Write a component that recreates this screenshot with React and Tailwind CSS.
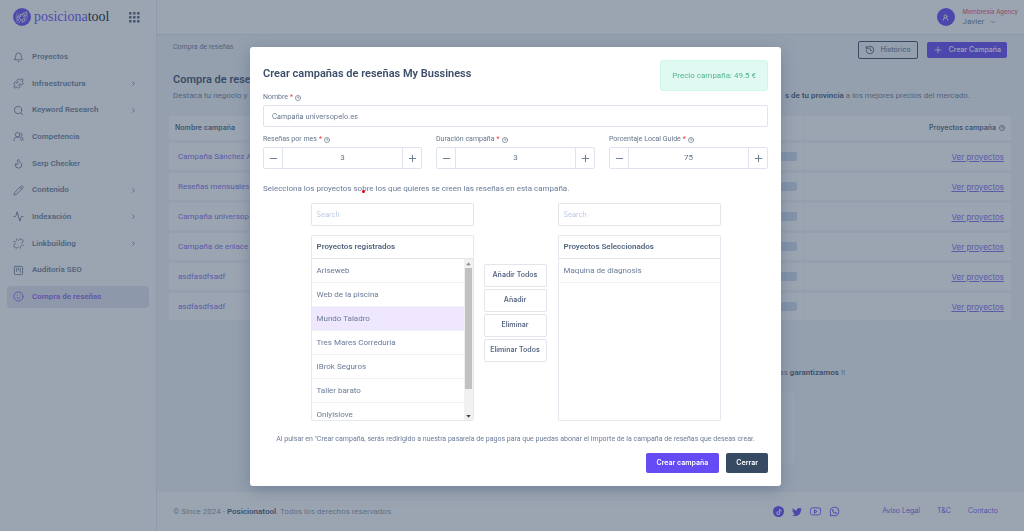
import React, { useState } from 'react';
import {
  Activity, Bell, ChevronDown, ChevronRight, Flame, History, Minus, Pencil,
  Plus, Puzzle, Search, Smile, SquareKanban, Unlink, UserRound, UsersRound,
} from 'lucide-react';
import { FaTiktok, FaTwitter, FaWhatsapp } from 'react-icons/fa';
import { FiYoutube } from 'react-icons/fi';

const menuItems = [
  { label: 'Proyectos', icon: Bell },
  { label: 'Infraestructura', icon: Puzzle, nested: true },
  { label: 'Keyword Research', icon: Search, nested: true },
  { label: 'Competencia', icon: UsersRound },
  { label: 'Serp Checker', icon: Flame },
  { label: 'Contenido', icon: Pencil, nested: true },
  { label: 'Indexación', icon: Activity, nested: true },
  { label: 'Linkbuilding', icon: Unlink, nested: true },
  { label: 'Auditoría SEO', icon: SquareKanban },
  { label: 'Compra de reseñas', icon: Smile, active: true },
];

const campaigns = [
  'Campaña Sánchez A',
  'Reseñas mensuales',
  'Campaña universop',
  'Campaña de enlace',
  'asdfasdfsadf',
  'asdfasdfsadf',
];

const registered = [
  'Ariseweb',
  'Web de la piscina',
  'Mundo Taladro',
  'Tres Mares Correduria',
  'IBrok Seguros',
  'Taller barato',
  'Onlyislove',
];

const HelpIcon = () => (
  <svg viewBox="0 0 14 14" className="size-[6px]" fill="none" stroke="currentColor" strokeWidth="1.6" strokeLinecap="round">
    <circle cx="7" cy="7" r="6" />
    <path d="M5.200 5.200c.3-1.800 3.600-1.600 3.500.2 0 1.200-1.700 1.300-1.700 2.600" />
  </svg>
);

const Logo = () => (
  <a href="#" className="flex items-center gap-[3px]">
    <svg viewBox="0 0 36 36" className="size-[18px]">
      <circle cx="18" cy="18" r="18" fill="#6549f5" />
      <g fill="none" stroke="#fff" strokeWidth="1.4" strokeLinecap="round" strokeLinejoin="round">
        <path d="M13 20c2-7 7-11 15-12 0 7-4 13-11 16z" />
        <path d="M14 17l-6 2 3-5 5-1M19 23l-1 6 5-3 1-6" />
        <circle cx="21.500" cy="14.500" r="2.500" />
        <path d="M12 22l-5 6M15 25l-4 5M10 21l-3 3" />
        <path d="M8 10c-3 5-2 11 2 15M27 11c3 5 1 12-3 16" strokeWidth=".8" />
      </g>
    </svg>
    <span className="font-['Liberation_Serif',serif] text-[14px] leading-[18px] text-[#6549f5]">
      posiciona<span className="text-[#0b1220]">tool</span>
    </span>
  </a>
);

const Sidebar = () => (
  <aside className="flex w-[157px] shrink-0 flex-col border-r border-slate-200 bg-white">
    <div className="flex h-[34px] items-center justify-between pl-[13px] pr-[16px]">
      <Logo />
      <button type="button" aria-label="Aplicaciones" className="text-[#4d6080]">
        <svg viewBox="0 0 11 11" className="size-[11px]" fill="currentColor">
          {[0, 4, 8].map((y) => [0, 4, 8].map((x) => (
            <rect key={`${x}-${y}`} x={x} y={y} width="2.600" height="2.600" rx=".7" />
          )))}
        </svg>
      </button>
    </div>
    <nav className="mt-3 flex h-[262px] flex-col justify-between px-[7px]">
      {menuItems.map(({ label, icon: Icon, nested, active }) => (
        <a
          key={label}
          href="#"
          className={`flex h-[22px] items-center rounded-sm pl-[6px] pr-3 text-[8px] font-semibold ${
            active ? 'bg-[#e3e7f2] text-[#8a5cf0]' : 'text-[#6b7b98]'
          }`}
        >
          <Icon className="size-[11px]" strokeWidth={2} />
          <span className="ml-2 flex-1">{label}</span>
          {nested && <ChevronRight className="size-[7px]" strokeWidth={3} />}
        </a>
      ))}
    </nav>
  </aside>
);

const TopBar = () => (
  <header className="flex h-[35px] items-center justify-end border-b border-slate-200 bg-white pr-[6px]">
    <span className="flex size-[18px] items-center justify-center rounded-full bg-[#5f42f5] text-white">
      <UserRound className="size-[7px]" strokeWidth={3} />
    </span>
    <div className="ml-2 leading-[10px] text-[#64748b]">
      <p className="font-[Inter,sans-serif] text-[6px] font-medium text-[#f05a6c]">Membresía Agency</p>
      <button type="button" className="flex items-center gap-[6px] text-[8px]">
        Javier <ChevronDown className="size-[6px]" strokeWidth={3} />
      </button>
    </div>
  </header>
);

const CampaignTable = () => (
  <table className="-mx-1 mt-[9px] w-[calc(100%_+_8px)] border-separate border-spacing-x-0 border-spacing-y-[3px] text-left text-[8px]">
    <thead>
      <tr className="h-6 bg-white font-[Inter,sans-serif] text-[7px] text-[#4d5f7d]">
        <th className="pl-[6px] font-semibold">Nombre campaña</th>
        <th className="w-[170px] border-r border-slate-100" aria-label="Progreso" />
        <th className="w-[207px] pr-[6px] font-semibold">
          <span className="flex items-center justify-end gap-[3px]">
            Proyectos campaña <HelpIcon />
          </span>
        </th>
      </tr>
    </thead>
    <tbody>
      {campaigns.map((name, i) => (
        <tr key={i} className="h-[27px] bg-white">
          <td className="pl-[9px]"><a href="#" className="text-[#8068ee]">{name}</a></td>
          <td className="border-r border-slate-100 pr-[6px]">
            <span className="block h-[9px] rounded-[2px] bg-[#cfdcf0]" />
          </td>
          <td className="pr-[7px] text-right font-[Inter,sans-serif]">
            <a href="#" className="text-[#8068ee] underline">Ver proyectos</a>
          </td>
        </tr>
      ))}
    </tbody>
  </table>
);

const Footer = () => (
  <footer className="flex h-[39px] items-center bg-white pl-4 pr-[26px] text-[8px] text-[#8493aa]">
    <p>
      © Since 2024 - <strong className="font-semibold text-[#40516d]">Posicionatool</strong>. Todos los derechos reservados
    </p>
    <div className="ml-auto flex items-center gap-2 text-[#5f42f5]">
      <a href="#" aria-label="TikTok" className="flex size-[11px] items-center justify-center rounded-full bg-[#5f42f5] text-white">
        <FaTiktok className="size-[6px]" />
      </a>
      <a href="#" aria-label="Twitter"><FaTwitter className="size-[10px]" /></a>
      <a href="#" aria-label="YouTube"><FiYoutube className="size-[11px]" /></a>
      <a href="#" aria-label="WhatsApp"><FaWhatsapp className="size-[11px]" /></a>
    </div>
    <div className="ml-[42px] flex gap-[17px] font-[Inter,sans-serif] text-[7px] text-[#7158ec]">
      <a href="#">Aviso Legal</a>
      <a href="#">T&amp;C</a>
      <a href="#">Contacto</a>
    </div>
  </footer>
);

const FieldLabel = ({ htmlFor, children }) => (
  <label htmlFor={htmlFor} className="flex h-3 items-center gap-[2px] pt-px text-[7px] text-[#64748b]">
    {children} <span className="text-red-500">*</span> <HelpIcon />
  </label>
);

const Stepper = ({ id, label, initial }) => {
  const [value, setValue] = useState(initial);

  return (
    <div className="flex flex-col gap-[2px]">
      <FieldLabel htmlFor={id}>{label}</FieldLabel>
      <div className="flex h-[22px] rounded-[2px] border border-[#dfe3ee] text-[#64748b]">
        <button type="button" aria-label="Menos" onClick={() => setValue(value - 1)} className="flex w-[19px] items-center justify-center border-r border-[#dfe3ee]">
          <Minus className="size-[11px]" />
        </button>
        <input
          id={id}
          value={value}
          onChange={(e) => setValue(Number(e.target.value) || 0)}
          className="min-w-0 flex-1 text-center text-[8px] outline-none"
        />
        <button type="button" aria-label="Más" onClick={() => setValue(value + 1)} className="flex w-[19px] items-center justify-center border-l border-[#dfe3ee]">
          <Plus className="size-[11px]" />
        </button>
      </div>
    </div>
  );
};

const ProjectList = ({ title, items, selected, scroll }) => (
  <div className="w-[163px] text-[8px] text-[#6b7b98]">
    <input
      aria-label={`Buscar en ${title}`}
      placeholder="Search"
      className="block h-[23px] w-full rounded-[2px] border border-[#e3e5ea] px-[5px] font-[Inter,sans-serif] text-[7px] outline-none placeholder:text-[#bccbe6]"
    />
    <div className="mt-[9px] flex h-[186px] flex-col overflow-hidden rounded-[2px] border border-[#e6e8ef]">
      <h3 className="h-[23px] shrink-0 border-b border-[#e3e5ea] px-[5px] text-[8px] leading-[22px] font-semibold text-[#52637f]">{title}</h3>
      <div className="flex min-h-0 flex-1">
        <ul className="flex-1 overflow-hidden">
          {items.map((item) => (
            <li
              key={item}
              className={`h-6 border-b border-[#eff1f5] px-[5px] leading-[23px] ${item === selected ? 'bg-[#efe7fe]' : ''}`}
            >
              {item}
            </li>
          ))}
        </ul>
        {scroll && (
          <div className="flex w-[9px] flex-col items-center bg-[#f1f1f1]">
            <svg viewBox="0 0 8 8" className="size-[9px] text-[#888]"><path d="M4 3l2 2.500H2z" fill="currentColor" /></svg>
            <div className="h-[121px] w-[7px] bg-[#c1c1c1]" />
            <svg viewBox="0 0 8 8" className="mt-auto size-[9px] text-[#444]"><path d="M4 6L2 3.500h4z" fill="currentColor" /></svg>
          </div>
        )}
      </div>
    </div>
  </div>
);

const CampaignModal = () => (
  <div className="fixed inset-0 flex items-start justify-center bg-[#374b63]/50 pt-[47px] pl-[7px]">
    <form
      role="dialog"
      aria-labelledby="modal-title"
      onSubmit={(e) => e.preventDefault()}
      className="w-[531px] rounded-[3px] bg-white p-[13px] shadow-[0_4px_16px_#4b5a8070]"
    >
      <div className="flex items-start justify-between">
        <h2 id="modal-title" className="mt-[5px] text-[11px] leading-[18px] font-semibold text-[#3c4d69]">
          Crear campañas de reseñas My Bussiness
        </h2>
        <p className="rounded-[3px] border border-[#cff8e8] bg-[#e1f9f3] px-[11px] text-[8px] leading-[29px] text-[#4fb58d]">
          Precio campaña: 49.5 €
        </p>
      </div>

      <div className="flex flex-col gap-[2px]">
        <FieldLabel htmlFor="nombre">Nombre</FieldLabel>
        <input
          id="nombre"
          defaultValue="Campaña universopelo.es"
          className="h-[22px] rounded-[2px] border border-[#dfe3ee] px-2 font-[Inter,sans-serif] text-[7px] text-[#64748b] outline-none"
        />
      </div>

      <div className="mt-[6px] grid grid-cols-3 gap-[14px]">
        <Stepper id="resenas" label="Reseñas por mes" initial={3} />
        <Stepper id="duracion" label="Duración campaña" initial={3} />
        <Stepper id="guide" label="Porcentaje Local Guide" initial={75} />
      </div>

      <p className="mt-3 text-[8px] leading-4 text-[#6b7b98]">
        Selecciona los proyectos s
        <span className="relative">
          o<span className="absolute bottom-0 left-full size-[3px] rounded-full bg-red-600" />
        </span>
        bre los que quieres se creen las reseñas en esta campaña.
      </p>

      <div className="mt-[6px] flex justify-center">
        <ProjectList title="Proyectos registrados" items={registered} selected="Mundo Taladro" scroll />
        <div className="mt-[61px] mr-[11px] ml-[10px] flex w-[63px] flex-col gap-[2px]">
          {['Añadir Todos', 'Añadir', 'Eliminar', 'Eliminar Todos'].map((label) => (
            <button key={label} type="button" className="h-[23px] rounded-[2px] border border-[#e3e5ea] font-[Inter,sans-serif] text-[7px] font-semibold text-[#5b6a85]">
              {label}
            </button>
          ))}
        </div>
        <ProjectList title="Proyectos Seleccionados" items={['Maquina de diagnosis']} />
      </div>

      <p className="mt-3 text-center text-[7px] leading-3 text-[#6b7b98]">
        Al pulsar en "Crear campaña, serás redirigido a nuestra pasarela de pagos para que puedas abonar el importe de la campaña de reseñas que deseas crear.
      </p>
      <div className="mt-2 flex justify-end gap-[7px] font-[Inter,sans-serif] text-[7px] font-semibold text-white">
        <button type="submit" className="h-5 rounded-[2px] bg-[#644bf3] px-[11px]">Crear campaña</button>
        <button type="button" className="h-5 rounded-[2px] bg-[#364a63] px-[10px]">Cerrar</button>
      </div>
    </form>
  </div>
);

const App = () => (
  <div className="flex min-h-screen bg-[#f1f5f9] font-[Roboto,sans-serif]">
    <Sidebar />
    <div className="flex min-w-0 flex-1 flex-col">
      <TopBar />
      <main className="flex-1 pr-[17px] pl-4">
        <div className="flex items-start justify-between pt-[6px]">
          <p className="text-[7px] leading-3 text-[#6b7b98]">Compra de reseñas</p>
          <div className="flex items-center gap-[9px] font-[Inter,sans-serif] text-[7px] font-medium">
            <button type="button" className="flex h-[18px] items-center gap-[6px] rounded-[2px] border border-[#364a63] px-[6px] text-[#6b7b98]">
              <History className="size-[10px] text-[#364a63]" /> Histórico
            </button>
            <button type="button" className="flex h-4 items-center gap-[6px] rounded-[2px] bg-[#5f42f5] px-[6px] text-white">
              <Plus className="size-[10px]" /> Crear Campaña
            </button>
          </div>
        </div>
        <h1 className="mt-[13px] text-[11px] leading-4 font-semibold text-[#3c4d69]">Compra de reseñas</h1>
        <div className="flex justify-between pr-[37px] text-[8px] leading-4 text-[#6b7b98]">
          <p>Destaca tu negocio y</p>
          <p><strong className="font-semibold text-[#40516d]">s de tu provincia</strong> a los mejores precios del mercado.</p>
        </div>
        <CampaignTable />
        <div className="mx-auto mt-[42px] w-[410px]">
          <p className="-mr-[50px] pb-[11px] text-right text-[8px] leading-4 text-[#6b7b98]">
            as <strong className="font-semibold text-[#40516d]">garantizamos</strong> !!
          </p>
          <div className="h-[72px] rounded-[3px] bg-[#f8fafc]" />
        </div>
      </main>
      <Footer />
    </div>
    <CampaignModal />
  </div>
);

export default App;
